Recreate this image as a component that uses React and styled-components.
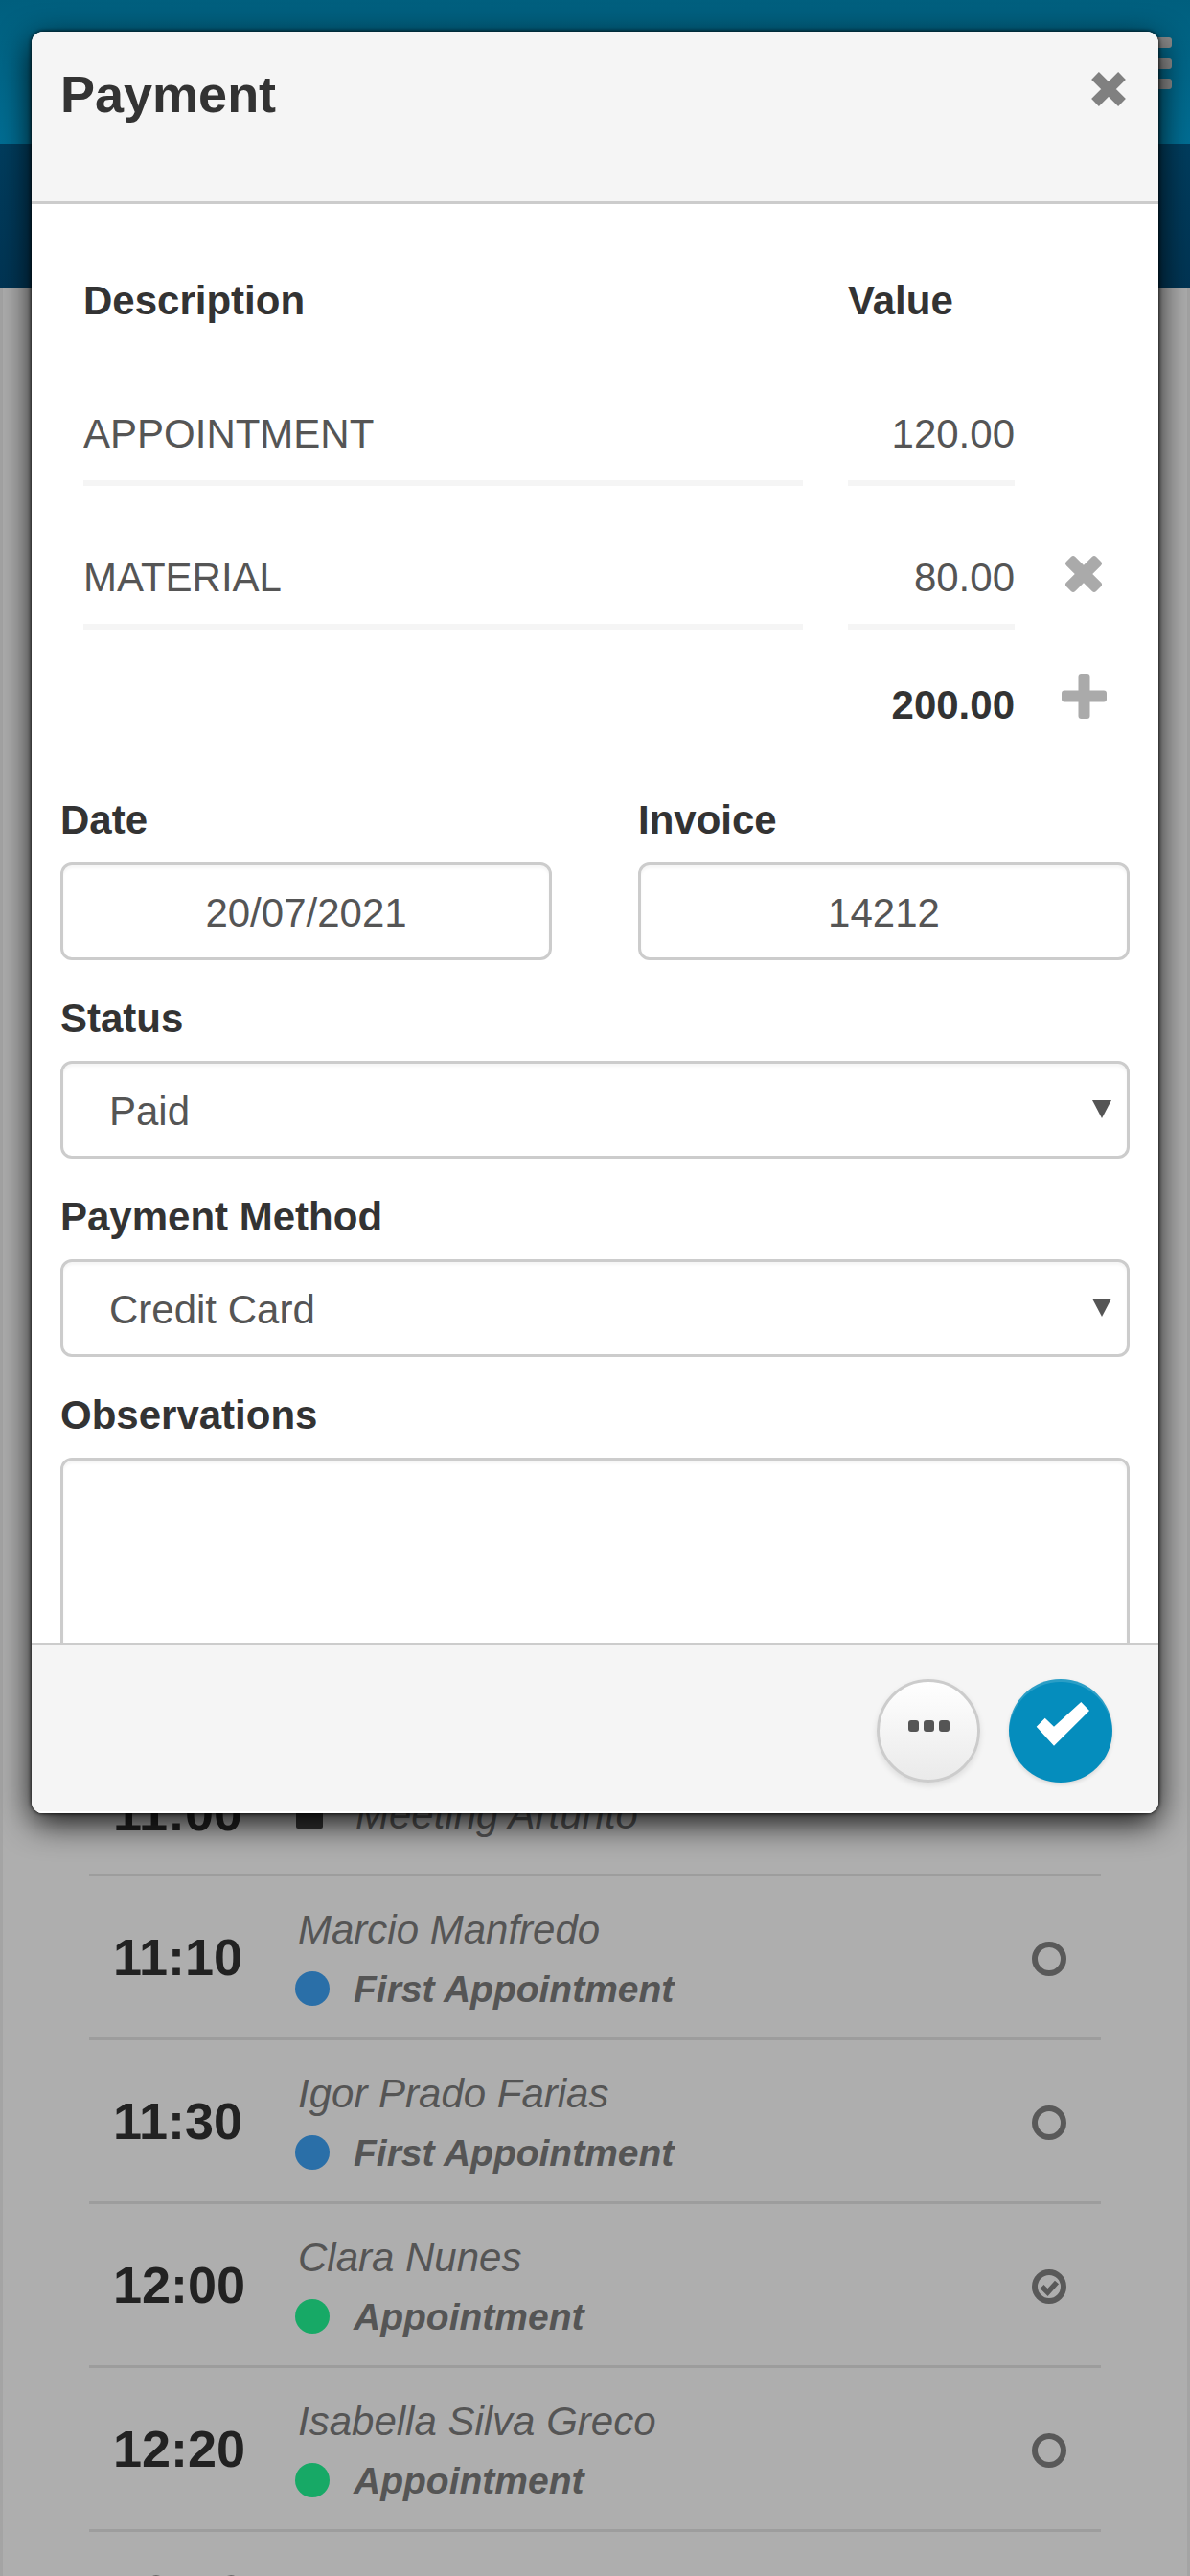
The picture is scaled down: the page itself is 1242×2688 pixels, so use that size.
import React from "react";
import styled, { createGlobalStyle } from "styled-components";

const GlobalStyle = createGlobalStyle`
  html, body {
    margin: 0;
    padding: 0;
    background: #aeaeae;
    font-family: "Liberation Sans", Arial, sans-serif;
  }
  * {
    box-sizing: border-box;
  }
`;

const appointments = [
  { time: "11:00", meeting: true, name: "Meeting Arturito" },
  { time: "11:10", name: "Marcio Manfredo", type: "First Appointment", color: "#2a6fa8" },
  { time: "11:30", name: "Igor Prado Farias", type: "First Appointment", color: "#2a6fa8" },
  { time: "12:00", name: "Clara Nunes", type: "Appointment", color: "#17a966", done: true },
  { time: "12:20", name: "Isabella Silva Greco", type: "Appointment", color: "#17a966" },
  { time: "12:40", meeting: true, name: "" },
];

const CloseIcon = () => (
  <svg width="36" height="36" viewBox="0 0 36 36">
    <path d="M4 4 L32 32 M32 4 L4 32" stroke="#808080" strokeWidth="11" />
  </svg>
);

const RemoveIcon = () => (
  <svg width="40" height="40" viewBox="0 0 40 40" fill="#aaa">
    <rect x="13.5" y="-2" width="13" height="44" rx="3" transform="rotate(45 20 20)" />
    <rect x="13.5" y="-2" width="13" height="44" rx="3" transform="rotate(-45 20 20)" />
  </svg>
);

const AddIcon = () => (
  <svg width="47" height="47" viewBox="0 0 47 47" fill="#aaa">
    <rect x="17.5" y="0" width="12" height="47" rx="3" />
    <rect x="0" y="17.5" width="47" height="12" rx="3" />
  </svg>
);

const StatusIcon = ({ done }) => (
  <svg width="36" height="36" viewBox="0 0 36 36" fill="none" stroke="#595959">
    <circle cx="18" cy="18" r="15" strokeWidth="6" />
    {done && <path d="M10.5 18 L16.5 24 L26 13.5" strokeWidth="5.5" />}
  </svg>
);

const CheckIcon = () => (
  <svg width="108" height="108" viewBox="0 0 108 108" fill="#fff">
    <polygon points="28.7,49.7 37.7,40.7 47,49.7 75.3,24 84,33 47,69.7" />
  </svg>
);

const Page = styled.div`
  position: relative;
  width: 1242px;
  height: 2688px;
  overflow: hidden;
  background: #aeaeae;
`;

const TopBar = styled.header`
  display: flex;
  flex-direction: column;
  align-items: flex-end;
  gap: 10.5px;
  height: 150px;
  padding: 39px 19px 0 0;
  background: linear-gradient(#005f7e, #006e94);
`;

const MenuLine = styled.span`
  width: 50px;
  height: 11px;
  border-radius: 3px;
  background: #8d8d8d;
`;

const SubBar = styled.div`
  height: 150px;
  background: linear-gradient(#003d5e, #003554);
`;

const List = styled.main`
  padding: 1527px 90px 0;
  border-left: 3px solid #a4a4a4;
  border-right: 3px solid #a4a4a4;
`;

const Row = styled.div`
  display: flex;
  align-items: center;
  height: ${(p) => (p.$meeting ? "131px" : "171px")};
  padding: 0 36px 0 25px;
  border-bottom: 3px solid #9d9d9d;
`;

const Time = styled.div`
  width: 190px;
  flex-shrink: 0;
  font-size: 54px;
  font-weight: bold;
  color: #222;
`;

const Info = styled.div`
  flex: 1;
  display: flex;
  flex-direction: column;
  padding-top: 3px;
`;

const Name = styled.div`
  height: 60px;
  line-height: 60px;
  padding-left: 3px;
  font-size: 42px;
  font-style: italic;
  color: #555;
  margin-bottom: 5px;
`;

const TypeLine = styled.div`
  display: flex;
  align-items: center;
  gap: 25px;
  height: 54px;
  font-size: 39px;
  font-weight: bold;
  font-style: italic;
  color: #555;
`;

const Dot = styled.span`
  width: 36px;
  height: 36px;
  margin-top: -2px;
  border-radius: 50%;
  background: ${(p) => p.$color};
`;

const MeetingLine = styled.div`
  display: flex;
  align-items: center;
  gap: 34px;
  margin-top: 2px;
  font-size: 42px;
  font-style: italic;
  color: #555;
`;

const Square = styled.span`
  width: 28px;
  height: 28px;
  margin-left: 1px;
  border-radius: 2px;
  background: #333;
`;

const StatusSlot = styled.div`
  display: flex;
  padding-top: 3px;
`;

const Modal = styled.section`
  position: absolute;
  top: 33px;
  left: 33px;
  width: 1176px;
  height: 1859px;
  display: flex;
  flex-direction: column;
  overflow: hidden;
  border-radius: 12px;
  background: #fff;
`;

const ModalShadow = styled.div`
  position: absolute;
  top: 33px;
  left: 33px;
  width: 1176px;
  height: 1859px;
  border-radius: 12px;
  box-shadow: 0 0 4px #000, 0 10px 34px rgba(0, 0, 0, 0.9);
`;

const ModalHeader = styled.div`
  position: relative;
  flex-shrink: 0;
  height: 180px;
  padding: 35px 30px 0;
  background: #f5f5f5;
  border-bottom: 3px solid #ccc;
`;

const Title = styled.h1`
  margin: 0;
  font-size: 54px;
  line-height: 60px;
  font-weight: bold;
  color: #333;
`;

const CloseButton = styled.span`
  position: absolute;
  top: 42px;
  right: 34px;
  display: flex;
`;

const ModalBody = styled.div`
  flex: 1;
  min-height: 0;
  overflow: hidden;
  padding: 71px 30px 0;
`;

const ItemsGrid = styled.div`
  display: grid;
  grid-template-columns: 751px 174px 50px;
  column-gap: 47px;
  padding-left: 24px;
`;

const ColumnTitle = styled.div`
  height: 60px;
  line-height: 60px;
  margin-bottom: 61px;
  font-size: 42px;
  font-weight: bold;
  color: #333;
`;

const ItemCell = styled.input`
  display: block;
  width: 100%;
  height: 102px;
  margin: 0 0 48px;
  padding: 0;
  border: 0;
  border-bottom: 6px solid #f5f5f5;
  outline: 0;
  background: transparent;
  font-family: inherit;
  font-size: 42px;
  color: #555;
  text-align: ${(p) => (p.$right ? "right" : "left")};
`;

const IconCell = styled.div`
  display: flex;
  justify-content: center;
  align-items: flex-start;
  margin-top: ${(p) => p.$offset || 0}px;
`;

const TotalValue = styled.div`
  height: 60px;
  line-height: 62px;
  font-size: 42px;
  font-weight: bold;
  color: #333;
  text-align: right;
`;

const Fields = styled.div`
  display: flex;
  flex-direction: column;
  gap: 31px;
  margin-top: 61px;
`;

const TwoColumns = styled.div`
  display: grid;
  grid-template-columns: 513px 513px;
  column-gap: 90px;
`;

const Label = styled.label`
  display: block;
  height: 60px;
  line-height: 60px;
  margin-bottom: 14px;
  font-size: 42px;
  font-weight: bold;
  color: #333;
`;

const fieldStyle = `
  display: block;
  width: 100%;
  border: 3px solid #ccc;
  border-radius: 12px;
  outline: 0;
  background: #fff;
  box-shadow: inset 0 3px 3px rgba(0, 0, 0, 0.04);
  font-family: inherit;
  font-size: 42px;
  color: #555;
`;

const TextField = styled.input`
  ${fieldStyle}
  height: 102px;
  padding: 3px 12px 0;
  text-align: center;
`;

const SelectWrap = styled.div`
  position: relative;
`;

const Select = styled.select`
  ${fieldStyle}
  height: 102px;
  padding: 3px 48px 0;
  appearance: none;
`;

const Arrow = styled.span`
  position: absolute;
  top: 41px;
  right: 19px;
  width: 0;
  height: 0;
  border-left: 10px solid transparent;
  border-right: 10px solid transparent;
  border-top: 19px solid #555;
`;

const TextArea = styled.textarea`
  ${fieldStyle}
  height: 300px;
  resize: none;
`;

const ModalFooter = styled.div`
  flex-shrink: 0;
  display: flex;
  justify-content: flex-end;
  align-items: flex-start;
  gap: 30px;
  height: 178px;
  padding: 35px 48px 0 0;
  background: #f5f5f5;
  border-top: 3px solid #ccc;
  box-shadow: inset 0 -2px 0 #fff;
`;

const MoreButton = styled.button`
  display: flex;
  align-items: center;
  justify-content: center;
  gap: 5px;
  width: 108px;
  height: 108px;
  padding: 0 0 10px;
  border: 3px solid #ccc;
  border-radius: 50%;
  background: linear-gradient(#fff, #eaeaea);
  box-shadow: 0 3px 6px rgba(0, 0, 0, 0.1);
`;

const MoreDot = styled.span`
  width: 11px;
  height: 12px;
  border-radius: 3px;
  background: #555;
`;

const ConfirmButton = styled.button`
  display: block;
  width: 108px;
  height: 108px;
  padding: 0;
  border: 0;
  border-radius: 50%;
  background: #058dbd;
  box-shadow: inset 0 3px 0 rgba(255, 255, 255, 0.15), 0 2px 4px rgba(0, 0, 0, 0.12);
`;

const SelectField = ({ label, value }) => (
  <div>
    <Label>{label}</Label>
    <SelectWrap>
      <Select defaultValue={value}>
        <option>{value}</option>
      </Select>
      <Arrow />
    </SelectWrap>
  </div>
);

const App = () => {
  return (
    <Page>
      <GlobalStyle />
      <TopBar>
        <MenuLine />
        <MenuLine />
        <MenuLine />
      </TopBar>
      <SubBar />
      <List>
        {appointments.map((a) => (
          <Row key={a.time} $meeting={a.meeting}>
            <Time>{a.time}</Time>
            <Info>
              {a.meeting ? (
                a.name && (
                  <MeetingLine>
                    <Square />
                    {a.name}
                  </MeetingLine>
                )
              ) : (
                <>
                  <Name>{a.name}</Name>
                  <TypeLine>
                    <Dot $color={a.color} />
                    {a.type}
                  </TypeLine>
                </>
              )}
            </Info>
            {!a.meeting && (
              <StatusSlot>
                <StatusIcon done={a.done} />
              </StatusSlot>
            )}
          </Row>
        ))}
      </List>

      <ModalShadow />
      <Modal>
        <ModalHeader>
          <Title>Payment</Title>
          <CloseButton>
            <CloseIcon />
          </CloseButton>
        </ModalHeader>
        <ModalBody>
          <ItemsGrid>
            <ColumnTitle>Description</ColumnTitle>
            <ColumnTitle>Value</ColumnTitle>
            <div />
            <ItemCell readOnly value="APPOINTMENT" />
            <ItemCell readOnly $right value="120.00" />
            <div />
            <ItemCell readOnly value="MATERIAL" />
            <ItemCell readOnly $right value="80.00" />
            <IconCell $offset={24}>
              <RemoveIcon />
            </IconCell>
            <div />
            <TotalValue>200.00</TotalValue>
            <IconCell $offset={-2}>
              <AddIcon />
            </IconCell>
          </ItemsGrid>
          <Fields>
            <TwoColumns>
              <div>
                <Label>Date</Label>
                <TextField readOnly value="20/07/2021" />
              </div>
              <div>
                <Label>Invoice</Label>
                <TextField readOnly value="14212" />
              </div>
            </TwoColumns>
            <SelectField label="Status" value="Paid" />
            <SelectField label="Payment Method" value="Credit Card" />
            <div>
              <Label>Observations</Label>
              <TextArea />
            </div>
          </Fields>
        </ModalBody>
        <ModalFooter>
          <MoreButton>
            <MoreDot />
            <MoreDot />
            <MoreDot />
          </MoreButton>
          <ConfirmButton>
            <CheckIcon />
          </ConfirmButton>
        </ModalFooter>
      </Modal>
    </Page>
  );
};

export default App;
